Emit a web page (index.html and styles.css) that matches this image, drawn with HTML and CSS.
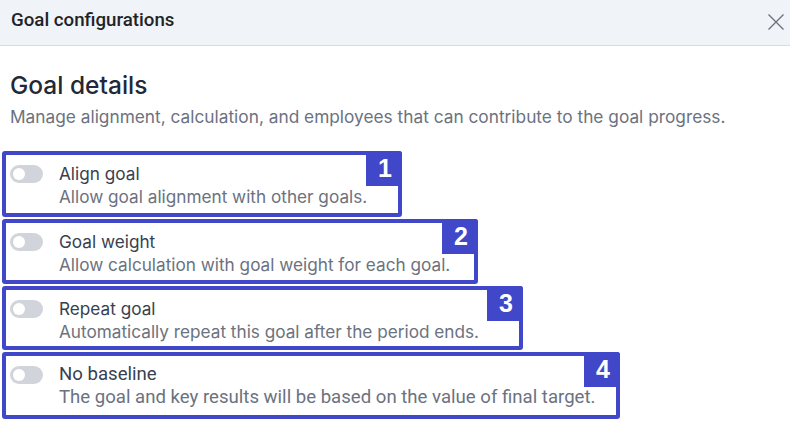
FILE: index.html
```html
<!DOCTYPE html>
<html lang="en">
<head>
<meta charset="utf-8">
<title>Goal configurations</title>
<link rel="stylesheet" href="styles.css">
</head>
<body>
<div class="panel">
  <header class="header">
    <h1 class="header-title">Goal configurations</h1>
    <button class="close" aria-label="Close">
      <svg width="18" height="18" viewBox="0 0 18 18"><path d="M1.5 1.5 L16.5 16.5 M16.5 1.5 L1.5 16.5" stroke="#6b7280" stroke-width="1.4" fill="none"/></svg>
    </button>
  </header>
  <main class="content">
    <h2 class="section-title">Goal details</h2>
    <p class="section-desc">Manage alignment, calculation, and employees that can contribute to the goal progress.</p>
    <div class="items">
      <div class="item item-1">
        <span class="toggle"><span class="knob"></span></span>
        <div class="item-text">
          <div class="item-title">Align goal</div>
          <div class="item-desc">Allow goal alignment with other goals.</div>
        </div>
        <span class="badge">1</span>
      </div>
      <div class="item item-2">
        <span class="toggle"><span class="knob"></span></span>
        <div class="item-text">
          <div class="item-title">Goal weight</div>
          <div class="item-desc">Allow calculation with goal weight for each goal.</div>
        </div>
        <span class="badge">2</span>
      </div>
      <div class="item item-3">
        <span class="toggle"><span class="knob"></span></span>
        <div class="item-text">
          <div class="item-title">Repeat goal</div>
          <div class="item-desc">Automatically repeat this goal after the period ends.</div>
        </div>
        <span class="badge">3</span>
      </div>
      <div class="item item-4">
        <span class="toggle"><span class="knob"></span></span>
        <div class="item-text">
          <div class="item-title">No baseline</div>
          <div class="item-desc">The goal and key results will be based on the value of final target.</div>
        </div>
        <span class="badge">4</span>
      </div>
    </div>
  </main>
</div>
</body>
</html>
```
FILE: styles.css
```css
* { box-sizing: border-box; }
html, body { margin: 0; padding: 0; background: #ffffff; }
body { font-family: Inter, "Noto Sans", sans-serif; width: 790px; height: 436px; overflow: hidden; }

.header {
  height: 46px;
  background: #f0f3f8;
  border-bottom: 1px solid #d8dce2;
  display: flex;
  align-items: center;
  justify-content: space-between;
  padding: 0 3px 6px 11px;
}
.header-title {
  margin: 0;
  font-family: Roboto, "Liberation Sans", sans-serif;
  font-size: 18.7px;
  font-weight: 500;
  color: #1f2328;
  line-height: 22px;
}
.close {
  border: 0;
  background: transparent;
  padding: 0;
  width: 22px;
  height: 22px;
  margin-top: 5px;
  display: flex;
  align-items: center;
  justify-content: center;
}

.content { padding: 24px 0 0 2px; }
.section-title {
  margin: 0 0 0 8px;
  font-size: 24.5px;
  font-weight: 500;
  color: #1f2937;
  line-height: 30px;
}
.section-desc {
  margin: 5px 0 0 8px;
  font-size: 17.3px;
  color: #6b7280;
  line-height: 24px;
}
.items {
  margin-top: 22px;
  display: flex;
  flex-direction: column;
  gap: 2px;
}
.item {
  position: relative;
  height: 65px;
  border: 4px solid #4047c9;
  border-radius: 3px;
  display: flex;
  align-items: flex-start;
  padding: 10px 0 0 4px;
}
.item-1 { width: 400px; height: 66px; }
.item-2 { width: 476px; height: 65px; }
.item-3 { width: 521px; height: 64px; }
.item-4 { width: 618px; height: 67px; }
.toggle {
  width: 33px;
  height: 18px;
  border-radius: 9px;
  background: #d1d5db;
  position: relative;
  flex: none;
  display: flex;
  align-items: center;
  padding-left: 3px;
}
.knob {
  width: 12px;
  height: 12px;
  border-radius: 50%;
  background: #ffffff;
}
.item-text { margin-left: 16px; margin-top: -3px; }
.item-title {
  font-size: 17.2px;
  color: #374151;
  line-height: 23px;
}
.item-desc {
  font-size: 17.2px;
  color: #6b7280;
  line-height: 23px;
}
.item-4 .item-text { font-family: Roboto, "Liberation Sans", sans-serif; }
.item-4 .item-title, .item-4 .item-desc { font-size: 18.6px; }
.badge {
  position: absolute;
  top: -4px;
  right: -4px;
  width: 36px;
  height: 35px;
  background: #4047c9;
  border-radius: 0 3px 0 0;
  color: #ffffff;
  font-family: "Liberation Sans", Arial, sans-serif;
  font-weight: 700;
  font-size: 25px;
  display: flex;
  align-items: center;
  justify-content: center;
  padding-left: 2px;
}
```
